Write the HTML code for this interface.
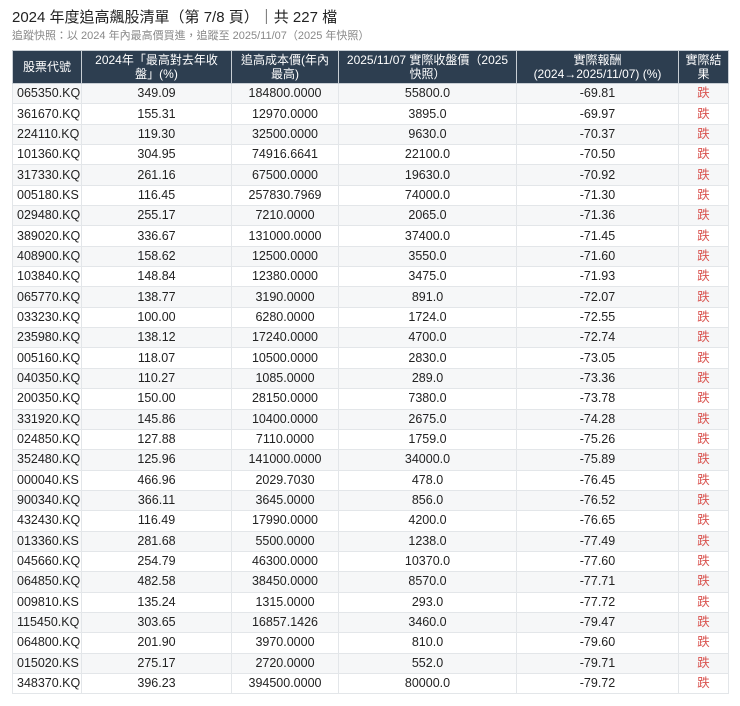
<!DOCTYPE html>
<html><head><meta charset="utf-8"><style>
body{margin:0;background:#fff;font-family:"Liberation Sans","Noto Sans CJK TC",sans-serif;color:#222;}
.t{position:absolute;left:12px;top:8px;font-size:15px;line-height:20px;color:#222;}
.s{position:absolute;left:12px;top:29px;font-size:11px;line-height:14px;color:#888;}
table{position:absolute;left:12px;top:50px;border-collapse:collapse;width:716px;font-size:12.5px;table-layout:fixed;}
th{background:#2d3e50;color:#fff;font-weight:normal;font-size:12px;line-height:14px;height:32px;padding:0 1px;border:1px solid #c8ced4;text-align:center;overflow:hidden;white-space:nowrap;}
td{height:19.35px;line-height:19px;padding:0 4px;border:1px solid #e3e6e9;text-align:center;overflow:hidden;white-space:nowrap;}
td:first-child{text-align:left;}
tr:nth-child(even) td{background:#f6f7f8;}
td.r{color:#d9534f;}
</style></head><body>
<div class="t">2024 年度追高飆股清單（第 7/8 頁）｜共 227 檔</div>
<div class="s">追蹤快照：以 2024 年內最高價買進，追蹤至 2025/11/07（2025 年快照）</div>
<table>
<colgroup><col style="width:69px"><col style="width:150px"><col style="width:107px"><col style="width:178px"><col style="width:162px"><col style="width:50px"></colgroup>
<tr><th>股票代號</th><th>2024年「最高對去年收<br>盤」(%)</th><th>追高成本價(年內<br>最高)</th><th>2025/11/07 實際收盤價（2025<br>快照）</th><th>實際報酬<br>(2024→2025/11/07) (%)</th><th>實際結<br>果</th></tr>
<tr><td>065350.KQ</td><td>349.09</td><td>184800.0000</td><td>55800.0</td><td>-69.81</td><td class="r">跌</td></tr>
<tr><td>361670.KQ</td><td>155.31</td><td>12970.0000</td><td>3895.0</td><td>-69.97</td><td class="r">跌</td></tr>
<tr><td>224110.KQ</td><td>119.30</td><td>32500.0000</td><td>9630.0</td><td>-70.37</td><td class="r">跌</td></tr>
<tr><td>101360.KQ</td><td>304.95</td><td>74916.6641</td><td>22100.0</td><td>-70.50</td><td class="r">跌</td></tr>
<tr><td>317330.KQ</td><td>261.16</td><td>67500.0000</td><td>19630.0</td><td>-70.92</td><td class="r">跌</td></tr>
<tr><td>005180.KS</td><td>116.45</td><td>257830.7969</td><td>74000.0</td><td>-71.30</td><td class="r">跌</td></tr>
<tr><td>029480.KQ</td><td>255.17</td><td>7210.0000</td><td>2065.0</td><td>-71.36</td><td class="r">跌</td></tr>
<tr><td>389020.KQ</td><td>336.67</td><td>131000.0000</td><td>37400.0</td><td>-71.45</td><td class="r">跌</td></tr>
<tr><td>408900.KQ</td><td>158.62</td><td>12500.0000</td><td>3550.0</td><td>-71.60</td><td class="r">跌</td></tr>
<tr><td>103840.KQ</td><td>148.84</td><td>12380.0000</td><td>3475.0</td><td>-71.93</td><td class="r">跌</td></tr>
<tr><td>065770.KQ</td><td>138.77</td><td>3190.0000</td><td>891.0</td><td>-72.07</td><td class="r">跌</td></tr>
<tr><td>033230.KQ</td><td>100.00</td><td>6280.0000</td><td>1724.0</td><td>-72.55</td><td class="r">跌</td></tr>
<tr><td>235980.KQ</td><td>138.12</td><td>17240.0000</td><td>4700.0</td><td>-72.74</td><td class="r">跌</td></tr>
<tr><td>005160.KQ</td><td>118.07</td><td>10500.0000</td><td>2830.0</td><td>-73.05</td><td class="r">跌</td></tr>
<tr><td>040350.KQ</td><td>110.27</td><td>1085.0000</td><td>289.0</td><td>-73.36</td><td class="r">跌</td></tr>
<tr><td>200350.KQ</td><td>150.00</td><td>28150.0000</td><td>7380.0</td><td>-73.78</td><td class="r">跌</td></tr>
<tr><td>331920.KQ</td><td>145.86</td><td>10400.0000</td><td>2675.0</td><td>-74.28</td><td class="r">跌</td></tr>
<tr><td>024850.KQ</td><td>127.88</td><td>7110.0000</td><td>1759.0</td><td>-75.26</td><td class="r">跌</td></tr>
<tr><td>352480.KQ</td><td>125.96</td><td>141000.0000</td><td>34000.0</td><td>-75.89</td><td class="r">跌</td></tr>
<tr><td>000040.KS</td><td>466.96</td><td>2029.7030</td><td>478.0</td><td>-76.45</td><td class="r">跌</td></tr>
<tr><td>900340.KQ</td><td>366.11</td><td>3645.0000</td><td>856.0</td><td>-76.52</td><td class="r">跌</td></tr>
<tr><td>432430.KQ</td><td>116.49</td><td>17990.0000</td><td>4200.0</td><td>-76.65</td><td class="r">跌</td></tr>
<tr><td>013360.KS</td><td>281.68</td><td>5500.0000</td><td>1238.0</td><td>-77.49</td><td class="r">跌</td></tr>
<tr><td>045660.KQ</td><td>254.79</td><td>46300.0000</td><td>10370.0</td><td>-77.60</td><td class="r">跌</td></tr>
<tr><td>064850.KQ</td><td>482.58</td><td>38450.0000</td><td>8570.0</td><td>-77.71</td><td class="r">跌</td></tr>
<tr><td>009810.KS</td><td>135.24</td><td>1315.0000</td><td>293.0</td><td>-77.72</td><td class="r">跌</td></tr>
<tr><td>115450.KQ</td><td>303.65</td><td>16857.1426</td><td>3460.0</td><td>-79.47</td><td class="r">跌</td></tr>
<tr><td>064800.KQ</td><td>201.90</td><td>3970.0000</td><td>810.0</td><td>-79.60</td><td class="r">跌</td></tr>
<tr><td>015020.KS</td><td>275.17</td><td>2720.0000</td><td>552.0</td><td>-79.71</td><td class="r">跌</td></tr>
<tr><td>348370.KQ</td><td>396.23</td><td>394500.0000</td><td>80000.0</td><td>-79.72</td><td class="r">跌</td></tr>
</table>
</body></html>
